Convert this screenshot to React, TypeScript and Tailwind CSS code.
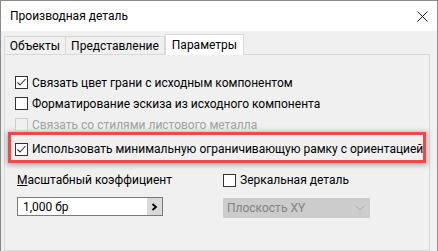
import React from "react";

const Check = ({ checked, disabled }: { checked?: boolean; disabled?: boolean }) => (
  <span
    className={
      "flex-none w-[13px] h-[13px] border flex items-center justify-center " +
      (disabled ? "border-[#cccccc] bg-[#f0f0f0]" : "border-[#333333] bg-white")
    }
  >
    {checked && (
      <svg width="11" height="11" viewBox="0 0 11 11">
        <polyline points="1.5,5.5 4,8 9.5,2" fill="none" stroke="#333" strokeWidth="1.1" />
      </svg>
    )}
  </span>
);

export default function App() {
  return (
    <div
      className="w-[438px] h-[251px] overflow-hidden flex flex-col border-l border-r border-t border-[#8a8a8a] text-[12px] text-black whitespace-nowrap"
      style={{ fontFamily: 'Roboto, "Noto Sans", sans-serif' }}
    >
      <div className="h-[30px] flex-none bg-white flex items-center justify-between pl-[9px] pr-[9px]">
        <span className="leading-none">Производная деталь</span>
        <svg width="11" height="11" viewBox="0 0 11 11">
          <path d="M0.5 0.5 L10.5 10.5 M10.5 0.5 L0.5 10.5" stroke="#111" strokeWidth="1" />
        </svg>
      </div>
      <div className="flex-1 bg-[#f0f0f0] pl-[3px] pr-[7px] pt-[3px] flex flex-col">
        <div className="flex items-end h-[20px] relative z-10">
          <div className="w-[62px] h-[18px] border border-b-0 border-[#d9d9d9] flex items-center justify-center leading-none">
            Объекты
          </div>
          <div className="w-[99px] h-[18px] border border-b-0 border-l-0 border-[#d9d9d9] flex items-center justify-center leading-none">
            Представление
          </div>
          <div className="w-[79px] h-[21px] -mb-[1px] bg-white border border-b-0 border-[#d9d9d9] flex items-center justify-center leading-none">
            Параметры
          </div>
        </div>
        <div className="flex-1 border border-[#d9d9d9] bg-[#f0f0f0] pt-[17px] pl-[10px] pr-[3px]">
          <div className="flex items-center h-[21px] gap-[4px]">
            <Check checked />
            <span className="leading-none">Связать цвет грани с исходным компонентом</span>
          </div>
          <div className="flex items-center h-[21px] gap-[4px]">
            <Check />
            <span className="leading-none">Форматирование эскиза из исходного компонента</span>
          </div>
          <div className="flex items-center h-[21px] gap-[4px] text-[#a0a0a0]">
            <Check disabled />
            <span className="leading-none">Связать со стилями листового металла</span>
          </div>
          <div className="-ml-[7px] mt-[-3px] h-[31px] border-[3px] border-[#f24848] shadow-[0_1px_5px_1px_rgba(0,0,0,0.3)] flex items-center gap-[4px] pl-[4px] pt-[3px]">
            <Check checked />
            <span className="leading-none">Использовать минимальную ограничивающую рамку с ориентацией</span>
          </div>
          <div className="flex mt-[9px]">
            <div className="w-[208px] pl-[2px]">
              <div className="h-[16px] flex items-center leading-none">
                <span>
                  <span className="underline">М</span>асштабный коэффициент
                </span>
              </div>
              <div className="mt-[9px] w-[146px] h-[19px] border border-[#7a7a7a] bg-white flex">
                <span className="flex-1 pl-[5px] flex items-center leading-none">1,000 бр</span>
                <span className="w-[15px] bg-[#dadada] flex items-center justify-center">
                  <svg width="7" height="8" viewBox="0 0 7 8">
                    <path d="M1.5 1 L5 4 L1.5 7" fill="none" stroke="#000" strokeWidth="1.8" />
                  </svg>
                </span>
              </div>
            </div>
            <div>
              <div className="h-[16px] flex items-center gap-[4px]">
                <Check />
                <span className="leading-none">Зеркальная деталь</span>
              </div>
              <div className="mt-[10px] w-[147px] h-[20px] bg-[#cccccc] flex items-center justify-between pl-[4px] pr-[5px] text-[#838383]">
                <span className="leading-none">Плоскость XY</span>
                <svg width="10" height="6" viewBox="0 0 10 6">
                  <path d="M0.5 0.5 L5 5 L9.5 0.5" fill="none" stroke="#a8a8a8" strokeWidth="1" />
                </svg>
              </div>
            </div>
          </div>
        </div>
      </div>
    </div>
  );
}
